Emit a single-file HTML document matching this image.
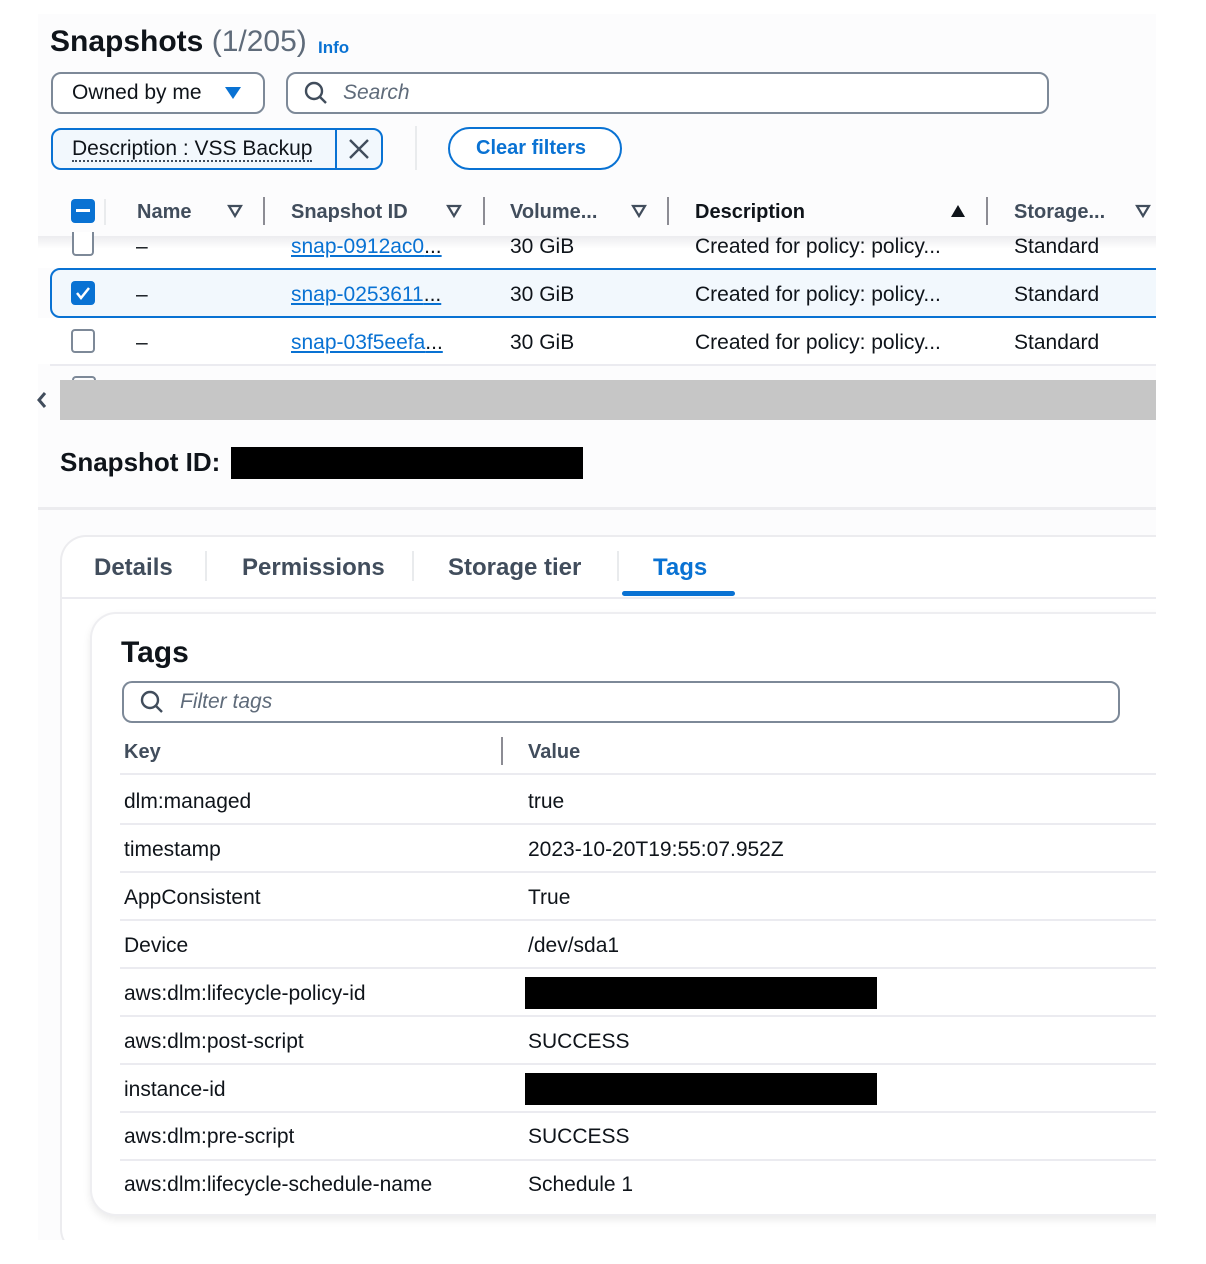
<!DOCTYPE html>
<html><head><meta charset="utf-8"><style>
*{box-sizing:border-box;margin:0;padding:0}
body{width:1206px;height:1264px;background:#fff;font-family:"Liberation Sans",sans-serif;color:#0f141a;position:relative;overflow:hidden}
.a{position:absolute;white-space:nowrap}
.page{position:absolute;left:38px;top:14px;width:1118px;height:1226px;background:#fcfcfd}
.hd{font-size:20px;font-weight:bold;color:#414d5c}
.t{font-size:21px}
.lnk{color:#0972d3;text-decoration:underline}
.cb{position:absolute;width:22px;height:22px;border:2px solid #7d8998;border-radius:4px;background:#fff}
.sep{position:absolute;width:2px;background:#8c8c94}
.hr{position:absolute;height:2px;background:#ebebf0}
</style></head><body>
<div class="page"></div>
<div class="a" style="left:50px;top:25px;font-size:30px;font-weight:bold">Snapshots <span style="font-weight:normal;color:#5f6b7a">(1/205)</span></div>
<div class="a" style="left:318px;top:38px;font-size:17px;font-weight:bold;color:#0972d3">Info</div>
<div class="a" style="left:51px;top:72px;width:214px;height:42px;border:2px solid #7d8998;border-radius:10px;background:#fff"></div>
<div class="a t" style="left:72px;top:81px">Owned by me</div>
<svg class="a" style="left:224px;top:86px" width="18" height="14"><path d="M1 1h16L9 13z" fill="#0972d3"/></svg>
<div class="a" style="left:286px;top:72px;width:763px;height:42px;border:2px solid #7d8998;border-radius:10px;background:#fff"></div>
<svg class="a" style="left:303px;top:80px" width="26" height="26"><circle cx="11" cy="11" r="8" fill="none" stroke="#414d5c" stroke-width="2.4"/><path d="M17 17l6 6" stroke="#414d5c" stroke-width="2.4"/></svg>
<div class="a t" style="left:343px;top:81px;font-style:italic;color:#5f6b7a">Search</div>
<div class="a" style="left:51px;top:128px;width:332px;height:42px;border:2px solid #0972d3;border-radius:10px;background:#f2f8fd"></div>
<div class="a" style="left:335px;top:128px;width:2px;height:42px;background:#0972d3"></div>
<div class="a t" style="left:72px;top:137px;border-bottom:2px dotted #414d5c;line-height:23px">Description : VSS Backup</div>
<svg class="a" style="left:348px;top:138px" width="22" height="22"><path d="M2 2l18 18M20 2L2 20" stroke="#414d5c" stroke-width="2.4"/></svg>
<div class="a" style="left:415px;top:126px;width:2px;height:44px;background:#e9ebed"></div>
<div class="a" style="left:448px;top:127px;width:174px;height:43px;border:2px solid #0972d3;border-radius:22px;background:#fff"></div>
<div class="a" style="left:476px;top:137px;font-size:20px;font-weight:bold;color:#0972d3">Clear filters</div>
<!-- table header -->
<div class="a" style="left:71px;top:199px;width:24px;height:24px;background:#0972d3;border-radius:4px"></div>
<div class="a" style="left:76px;top:209px;width:14px;height:3px;background:#fff"></div>
<div class="sep" style="left:104px;top:199px;height:26px;background:#e9ebed"></div>
<div class="a hd" style="left:137px;top:201px">Name</div>
<svg class="a" style="left:227px;top:204px" width="16" height="14"><path d="M2 2h12L8 12z" fill="none" stroke="#414d5c" stroke-width="2.2"/></svg>
<div class="sep" style="left:263px;top:197px;height:28px"></div>
<div class="a hd" style="left:291px;top:201px">Snapshot ID</div>
<svg class="a" style="left:446px;top:204px" width="16" height="14"><path d="M2 2h12L8 12z" fill="none" stroke="#414d5c" stroke-width="2.2"/></svg>
<div class="sep" style="left:483px;top:197px;height:28px"></div>
<div class="a hd" style="left:510px;top:201px">Volume...</div>
<svg class="a" style="left:631px;top:204px" width="16" height="14"><path d="M2 2h12L8 12z" fill="none" stroke="#414d5c" stroke-width="2.2"/></svg>
<div class="sep" style="left:667px;top:197px;height:28px"></div>
<div class="a hd" style="left:695px;top:201px;color:#0f141a">Description</div>
<svg class="a" style="left:950px;top:204px" width="16" height="14"><path d="M1 13h14L8 1z" fill="#0f141a"/></svg>
<div class="sep" style="left:986px;top:197px;height:28px"></div>
<div class="a hd" style="left:1014px;top:201px">Storage...</div>
<svg class="a" style="left:1135px;top:204px" width="16" height="14"><path d="M2 2h12L8 12z" fill="none" stroke="#414d5c" stroke-width="2.2"/></svg>
<!-- rows -->
<div class="a" style="left:38px;top:236px;width:1118px;height:32px;background:linear-gradient(#ececef,#fff 40%)"></div>
<div class="cb" style="left:72px;top:232px;height:24px;border-top:none;border-radius:0 0 4px 4px"></div>
<div class="a t" style="left:136px;top:235px">–</div>
<div class="a t lnk" style="left:291px;top:235px">snap-0912ac0<span style="color:#0f141a;text-decoration:none">...</span></div>
<div class="a t" style="left:510px;top:235px">30 GiB</div>
<div class="a t" style="left:695px;top:235px">Created for policy: policy...</div>
<div class="a t" style="left:1014px;top:235px">Standard</div>
<div class="a" style="left:50px;top:268px;width:1120px;height:50px;border:2px solid #0972d3;border-radius:10px;background:#f2f8fd"></div>
<div class="a" style="left:71px;top:281px;width:24px;height:24px;background:#0972d3;border-radius:4px"></div>
<svg class="a" style="left:71px;top:281px" width="24" height="24"><path d="M6 12l4 5 8-10" fill="none" stroke="#fff" stroke-width="2.5"/></svg>
<div class="a t" style="left:136px;top:283px">–</div>
<div class="a t lnk" style="left:291px;top:283px">snap-0253611<span style="color:#0f141a;text-decoration:none">...</span></div>
<div class="a t" style="left:510px;top:283px">30 GiB</div>
<div class="a t" style="left:695px;top:283px">Created for policy: policy...</div>
<div class="a t" style="left:1014px;top:283px">Standard</div>
<div class="a" style="left:38px;top:318px;width:1118px;height:46px;background:#fff"></div>
<div class="cb" style="left:71px;top:329px;width:24px;height:24px"></div>
<div class="a t" style="left:136px;top:331px">–</div>
<div class="a t lnk" style="left:291px;top:331px">snap-03f5eefa<span style="color:#0f141a;text-decoration:none">...</span></div>
<div class="a t" style="left:510px;top:331px">30 GiB</div>
<div class="a t" style="left:695px;top:331px">Created for policy: policy...</div>
<div class="a t" style="left:1014px;top:331px">Standard</div>
<div class="hr" style="left:50px;top:364px;width:1106px"></div>
<div class="a" style="left:72px;top:376px;width:24px;height:4px;border:2px solid #7d8998;border-bottom:none;border-radius:4px 4px 0 0"></div>
<div class="a" style="left:60px;top:380px;width:1096px;height:40px;background:#c6c6c6"></div>
<svg class="a" style="left:36px;top:391px" width="12" height="18"><path d="M9 2L3 9l6 7" fill="none" stroke="#414d5c" stroke-width="3"/></svg>
<div class="a" style="left:60px;top:447px;font-size:26px;font-weight:bold">Snapshot ID:</div>
<div class="a" style="left:231px;top:447px;width:352px;height:32px;background:#000"></div>
<div class="a" style="left:38px;top:507px;width:1118px;height:3px;background:#ececef"></div>
<!-- outer card -->
<div class="a" style="left:60px;top:535px;width:1110px;height:720px;border:2px solid #ececef;border-right:none;border-radius:26px 0 0 26px;background:#fff"></div>
<div class="a hd" style="left:94px;top:554px;font-size:24px">Details</div>
<div class="sep" style="left:205px;top:551px;height:30px;background:#e9ebed"></div>
<div class="a hd" style="left:242px;top:554px;font-size:24px">Permissions</div>
<div class="sep" style="left:412px;top:551px;height:30px;background:#e9ebed"></div>
<div class="a hd" style="left:448px;top:554px;font-size:24px">Storage tier</div>
<div class="sep" style="left:617px;top:551px;height:30px;background:#e9ebed"></div>
<div class="a" style="left:653px;top:554px;font-size:24px;font-weight:bold;color:#0972d3">Tags</div>
<div class="a" style="left:622px;top:591px;width:113px;height:5px;background:#0972d3;border-radius:3px"></div>
<div class="a" style="left:62px;top:597px;width:1094px;height:2px;background:#ebebf0"></div>
<div class="a" style="left:90px;top:612px;width:1080px;height:604px;border:2px solid #eeeef1;border-right:none;border-radius:26px 0 0 26px;background:#fff;box-shadow:0 4px 8px rgba(0,0,0,.08)"></div>
<div class="a" style="left:121px;top:636px;font-size:30px;font-weight:bold">Tags</div>
<div class="a" style="left:122px;top:681px;width:998px;height:42px;border:2px solid #7d8998;border-radius:10px"></div>
<svg class="a" style="left:139px;top:689px" width="26" height="26"><circle cx="11" cy="11" r="8" fill="none" stroke="#414d5c" stroke-width="2.4"/><path d="M17 17l6 6" stroke="#414d5c" stroke-width="2.4"/></svg>
<div class="a t" style="left:180px;top:690px;font-style:italic;color:#5f6b7a">Filter tags</div>
<div class="a hd" style="left:124px;top:741px">Key</div>
<div class="sep" style="left:501px;top:737px;height:28px"></div>
<div class="a hd" style="left:528px;top:741px">Value</div>
<div class="hr" style="left:120px;top:773px;width:1036px"></div>
<div class="a t" style="left:124px;top:790px">dlm:managed</div><div class="a t" style="left:528px;top:790px">true</div>
<div class="hr" style="left:120px;top:823px;width:1036px"></div>
<div class="a t" style="left:124px;top:838px">timestamp</div><div class="a t" style="left:528px;top:838px">2023-10-20T19:55:07.952Z</div>
<div class="hr" style="left:120px;top:871px;width:1036px"></div>
<div class="a t" style="left:124px;top:886px">AppConsistent</div><div class="a t" style="left:528px;top:886px">True</div>
<div class="hr" style="left:120px;top:919px;width:1036px"></div>
<div class="a t" style="left:124px;top:934px">Device</div><div class="a t" style="left:528px;top:934px">/dev/sda1</div>
<div class="hr" style="left:120px;top:967px;width:1036px"></div>
<div class="a t" style="left:124px;top:982px">aws:dlm:lifecycle-policy-id</div><div class="a" style="left:525px;top:977px;width:352px;height:32px;background:#000"></div>
<div class="hr" style="left:120px;top:1015px;width:1036px"></div>
<div class="a t" style="left:124px;top:1030px">aws:dlm:post-script</div><div class="a t" style="left:528px;top:1030px">SUCCESS</div>
<div class="hr" style="left:120px;top:1063px;width:1036px"></div>
<div class="a t" style="left:124px;top:1078px">instance-id</div><div class="a" style="left:525px;top:1073px;width:352px;height:32px;background:#000"></div>
<div class="hr" style="left:120px;top:1111px;width:1036px"></div>
<div class="a t" style="left:124px;top:1125px">aws:dlm:pre-script</div><div class="a t" style="left:528px;top:1125px">SUCCESS</div>
<div class="hr" style="left:120px;top:1159px;width:1036px"></div>
<div class="a t" style="left:124px;top:1173px">aws:dlm:lifecycle-schedule-name</div><div class="a t" style="left:528px;top:1173px">Schedule 1</div>
<div class="a" style="left:1156px;top:0;width:50px;height:1264px;background:#fff"></div>
<div class="a" style="left:0;top:1240px;width:1206px;height:24px;background:#fff"></div>
</body></html>
